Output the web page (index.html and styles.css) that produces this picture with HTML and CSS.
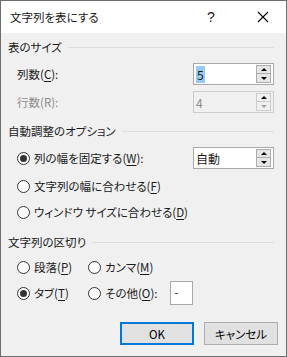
FILE: index.html
```html
<!DOCTYPE html>
<html lang="ja">
<head>
    <meta charset="UTF-8">
    <title>文字列を表にする</title>
    <link rel="stylesheet" href="styles.css">
</head>
<body>
    <div class="window">
        <div class="titlebar">
            <span class="title">文字列を表にする</span>
            <span class="help">?</span>
            <span class="close">
                <svg width="12" height="12" viewBox="0 0 12 12">
                    <path d="M1 1 L11 11 M11 1 L1 11" stroke="#000" stroke-width="1.1" fill="none"/>
                </svg>
            </span>
        </div>

        <div class="content">
            <!-- 表のサイズ -->
            <div class="group-head h1"><span>表のサイズ</span><div class="rule"></div></div>
            <div class="row r-cols">
                <span class="label">列数(<u>C</u>):</span>
                <div class="spin">
                    <span class="value"><span class="sel">5</span></span>
                    <div class="spin-btns">
                        <div class="sbtn"><span class="arr up"></span></div>
                        <div class="sbtn"><span class="arr down"></span></div>
                    </div>
                </div>
            </div>
            <div class="row r-rows">
                <span class="label disabled">行数(R):</span>
                <div class="spin spin-disabled">
                    <span class="value">4</span>
                    <div class="spin-btns">
                        <div class="sbtn"><span class="arr up"></span></div>
                        <div class="sbtn"><span class="arr down"></span></div>
                    </div>
                </div>
            </div>

            <!-- 自動調整のオプション -->
            <div class="group-head h2"><span>自動調整のオプション</span><div class="rule"></div></div>
            <div class="row r-opt1">
                <label class="radio"><span class="dot checked"></span>列の幅を固定する(<u>W</u>):</label>
                <div class="spin">
                    <span class="value">自動</span>
                    <div class="spin-btns">
                        <div class="sbtn"><span class="arr up"></span></div>
                        <div class="sbtn"><span class="arr down"></span></div>
                    </div>
                </div>
            </div>
            <div class="row r-opt2">
                <label class="radio"><span class="dot"></span>文字列の幅に合わせる(<u>F</u>)</label>
            </div>
            <div class="row r-opt3">
                <label class="radio"><span class="dot"></span>ウィンドウ サイズに合わせる(<u>D</u>)</label>
            </div>

            <!-- 文字列の区切り -->
            <div class="group-head h3"><span>文字列の区切り</span><div class="rule"></div></div>
            <div class="row r-sep1">
                <label class="radio col1"><span class="dot"></span>段落(<u>P</u>)</label>
                <label class="radio"><span class="dot"></span>カンマ(<u>M</u>)</label>
            </div>
            <div class="row r-sep2">
                <label class="radio col1"><span class="dot checked"></span>タブ(<u>T</u>)</label>
                <label class="radio"><span class="dot"></span>その他(<u>O</u>):</label>
                <div class="other-box">-</div>
            </div>

            <div class="buttons">
                <button class="btn btn-default">OK</button>
                <button class="btn">キャンセル</button>
            </div>
        </div>
    </div>
</body>
</html>
```

FILE: styles.css
```css
html, body {
    margin: 0;
    padding: 0;
    background: #f0f0f0;
}
body {
    font-family: "Noto Sans CJK JP", "Noto Sans", sans-serif;
    font-size: 11.5px;
    font-feature-settings: "palt";
    color: #1a1a1a;
}
.window {
    box-sizing: border-box;
    width: 287px;
    height: 357px;
    border: 1px solid #6e6e6e;
    background: #f0f0f0;
}
.titlebar {
    height: 32px;
    background: #fff;
    display: flex;
    align-items: center;
    padding-left: 9px;
}
.title {
    flex: 1;
}
.help {
    width: 14px;
    margin-right: 36px;
    font-family: "Liberation Sans", sans-serif;
    font-size: 14px;
}
.close {
    width: 12px;
    margin-right: 17px;
    display: flex;
}
.content {
    padding: 0 12px 0 7px;
}
.group-head {
    height: 20px;
    display: flex;
    align-items: center;
    gap: 6px;
}
.group-head .rule {
    flex: 1;
    border-top: 1px solid #dcdcdc;
    margin-top: 1px;
}
.h1 { margin-top: 4px; }
.h2 { margin-top: 8px; }
.h3 { margin-top: 9px; }
.row {
    display: flex;
    align-items: center;
    height: 22px;
    padding-left: 9px;
}
.r-cols { margin-top: 6px; }
.r-rows { margin-top: 6px; }
.r-opt1 { margin-top: 6px; }
.r-opt2 { margin-top: 6px; }
.r-opt3 { margin-top: 4px; }
.r-sep1 { margin-top: 4px; }
.r-sep2 { margin-top: 3px; height: 24px; }
.label {
    flex: 1;
}
.disabled {
    color: #8c8c8c;
}
u {
    text-decoration: underline;
    text-underline-offset: 2px;
}
.spin {
    box-sizing: border-box;
    width: 81px;
    height: 22px;
    border: 1px solid #a8a8a8;
    background: #fff;
    display: flex;
    align-items: center;
    padding-left: 2px;
}
.spin .value {
    flex: 1;
    font-size: 12px;
}
.sel {
    background: #99c9ef;
    padding: 0 1px;
}
.spin-disabled {
    background: #f0f0f0;
    border-color: #cccccc;
    color: #8c8c8c;
}
.spin-btns {
    display: flex;
    flex-direction: column;
    margin-right: 2px;
}
.sbtn {
    box-sizing: border-box;
    width: 15px;
    height: 9px;
    border: 1px solid #adadad;
    background: #e5e5e5;
    display: flex;
    align-items: center;
    justify-content: center;
}
.sbtn + .sbtn {
    border-top: none;
}
.arr {
    width: 0;
    height: 0;
    border-left: 3px solid transparent;
    border-right: 3px solid transparent;
}
.arr.up {
    border-bottom: 3px solid #000;
}
.arr.down {
    border-top: 3px solid #000;
}
.spin-disabled .sbtn {
    background: #f0f0f0;
    border-color: #cccccc;
}
.spin-disabled .sbtn + .sbtn .arr.down {
    border-top-color: #a0a0a0;
}
.radio {
    display: flex;
    align-items: center;
    flex: 1;
    white-space: nowrap;
}
.radio.col1 {
    flex: 0 0 71px;
}
.r-sep1 .radio:not(.col1),
.r-sep2 .radio:not(.col1) {
    flex: 0 0 auto;
}
.dot {
    box-sizing: border-box;
    width: 13px;
    height: 13px;
    border: 1px solid #333;
    border-radius: 50%;
    background: #fff;
    margin-right: 4px;
    display: flex;
    align-items: center;
    justify-content: center;
}
.dot.checked::after {
    content: "";
    width: 7px;
    height: 7px;
    border-radius: 50%;
    background: #333;
}
.other-box {
    box-sizing: border-box;
    width: 23px;
    height: 24px;
    border: 1px solid #a8a8a8;
    background: #fff;
    margin-left: 12px;
    padding-left: 4px;
    line-height: 20px;
}
.buttons {
    display: flex;
    justify-content: flex-end;
    gap: 10px;
    margin-top: 17px;
    margin-right: -4px;
}
.btn {
    box-sizing: border-box;
    width: 74px;
    height: 23px;
    border: 1px solid #adadad;
    background: #e1e1e1;
    font-family: "Noto Sans CJK JP", sans-serif;
    font-feature-settings: "palt";
    font-size: 11.5px;
    padding: 0;
    color: #000;
}
.btn-default {
    border: 2px solid #0078d7;
}
```
